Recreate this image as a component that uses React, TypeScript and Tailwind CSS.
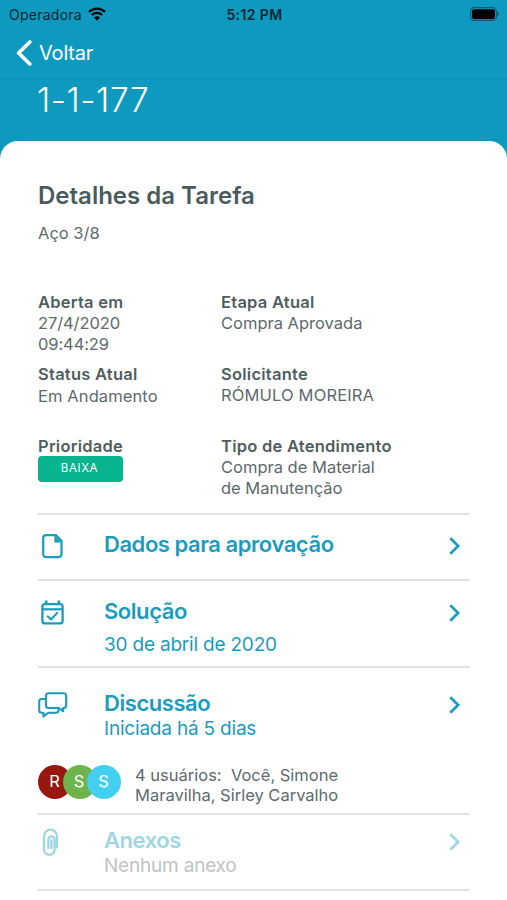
import React from "react";
import clsx from "clsx";

type IconProps = {
  className?: string;
};

const WifiIcon = ({ className }: IconProps) => (
  <svg className={className} viewBox="0 0 18 14" fill="none">
    <path d="M1 4.9A11.6 11.6 0 0 1 17 4.9" stroke="currentColor" strokeWidth="2.3" />
    <path d="M3.8 8A7.6 7.6 0 0 1 14.2 8" stroke="currentColor" strokeWidth="2.2" />
    <path d="M9 13.8 5.9 10.6a4.6 4.6 0 0 1 6.2 0Z" fill="currentColor" />
  </svg>
);

const BatteryIcon = ({ className }: IconProps) => (
  <svg className={className} viewBox="0 0 30 14" fill="none">
    <rect x="0.6" y="0.6" width="25.8" height="12.8" rx="3.6" stroke="#000" strokeOpacity="0.4" strokeWidth="1.2" />
    <rect x="2" y="2.2" width="23" height="9.8" rx="2.2" fill="#000" />
    <path d="M27.4 4.8c2 .6 2 3.8 0 4.4Z" fill="#000" fillOpacity="0.45" />
  </svg>
);

const BackIcon = ({ className }: IconProps) => (
  <svg className={className} viewBox="0 0 16 26" fill="none">
    <path d="M13.8 2 2.6 13l11.2 11" stroke="currentColor" strokeWidth="3.6" strokeLinecap="round" strokeLinejoin="round" />
  </svg>
);

const ChevronIcon = ({ className }: IconProps) => (
  <svg className={className} viewBox="0 0 12 18" fill="none">
    <path d="m1.3 1.2 7.8 7.8-7.8 7.8" stroke="currentColor" strokeWidth="2.7" />
  </svg>
);

const DocumentIcon = ({ className }: IconProps) => (
  <svg className={className} viewBox="0 0 30 30" fill="none">
    <path
      d="M8.2 4.2h9.9l5.4 5.6v13.4a3 3 0 0 1-3 3H8.2a3 3 0 0 1-3-3v-16a3 3 0 0 1 3-3Z"
      stroke="currentColor"
      strokeWidth="2.2"
      strokeLinejoin="round"
    />
    <path d="M16.4 4v7.400h7.200Z" fill="currentColor" />
  </svg>
);

const CalendarIcon = ({ className }: IconProps) => (
  <svg className={className} viewBox="0 0 30 30" fill="none">
    <rect x="4.4" y="6.200" width="20.2" height="19.200" rx="2.5" stroke="currentColor" strokeWidth="2.3" />
    <path d="M5 11.300h19.500" stroke="currentColor" strokeWidth="2.2" />
    <path d="M8.2 2.600v3.400M20.800 2.600v3.400" stroke="currentColor" strokeWidth="2.6" />
    <path d="m9.200 17.700 3.900 3.700 6.800-7.300" stroke="currentColor" strokeWidth="2.1" />
  </svg>
);

const ChatIcon = ({ className }: IconProps) => (
  <svg className={className} viewBox="0 0 30 30" fill="none" stroke="currentColor" strokeWidth="2.1" strokeLinejoin="round">
    <path d="M10.500 3.200h15.200a2.500 2.500 0 0 1 2.500 2.500v9.800a2.500 2.500 0 0 1-2.500 2.500h-.6v3.200L20.800 18H10.500A2.500 2.500 0 0 1 8 15.500V5.700a2.500 2.500 0 0 1 2.500-2.500Z" />
    <path d="M8 9H3.700a2.500 2.500 0 0 0-2.500 2.500v8.800a2.500 2.500 0 0 0 2.500 2.500h1.700v3.600l4.800-3.600h7.800a2.500 2.500 0 0 0 2.500-2.500V18" />
  </svg>
);

const ClipIcon = ({ className }: IconProps) => (
  <svg className={className} viewBox="0 0 30 30" fill="none" stroke="currentColor" strokeWidth="2.3" strokeLinecap="round">
    <path d="M19 20.500V9.200a6.500 6.500 0 0 0-13 0V22.500a5.300 5.300 0 0 0 10.600 0V12.400a3.100 3.100 0 0 0-6.200 0v8.800" />
    <path d="M13.500 13.200v8" />
  </svg>
);

type FieldProps = {
  label: string;
  children: React.ReactNode;
};

const Field = ({ label, children }: FieldProps) => (
  <div className="h-[72px]">
    <div className="leading-[21.2px] font-semibold tracking-[0.25px] text-[#4f5e60]">{label}</div>
    {children}
  </div>
);

type RowProps = {
  icon: React.ReactNode;
  title: string;
  subtitle?: string;
  disabled?: boolean;
  className: string;
  subtitleClassName?: string;
  children?: React.ReactNode;
};

const Row = ({ icon, title, subtitle, disabled, className, subtitleClassName, children }: RowProps) => (
  <section className={clsx("border-b-2 border-[#e0e1e2]", className)}>
    <button
      className={clsx("flex w-full items-start text-left", disabled ? "text-[#9fd6e5]" : "text-[#1b9bbd]")}
      disabled={disabled}
    >
      <span className="w-[66px] shrink-0">{icon}</span>
      <span className="flex-1">
        <span className="block text-[22px] leading-[27px] font-semibold tracking-[-0.45px]">{title}</span>
        {subtitle && (
          <span className={clsx("block text-[19px] leading-6 tracking-[-0.2px]", subtitleClassName)}>{subtitle}</span>
        )}
      </span>
      <ChevronIcon className="mt-[6px] mr-[9px] h-[18px] w-3" />
    </button>
    {children}
  </section>
);

const users = [
  { initial: "R", color: "bg-[#98180f]" },
  { initial: "S", color: "bg-[#6cb44b]" },
  { initial: "S", color: "bg-[#43cfef]" },
];

export default function App() {
  return (
    <div className="flex h-[900px] w-[507px] flex-col overflow-hidden bg-[#0e9abf] font-['Inter',sans-serif]">
      <header className="h-20 border-b border-[#0c90b4]">
        <div className="grid h-7 grid-cols-3 items-center pr-[7px] pl-[9px] text-[14px] text-[#042630]">
          <div className="flex items-center gap-[6px]">
            <span className="tracking-[0.25px]">Operadora</span>
            <WifiIcon className="h-[14px] w-[18px] text-black" />
          </div>
          <div className="text-center font-semibold tracking-[0.4px]">5:12 PM</div>
          <BatteryIcon className="mb-px h-[14px] w-[30px] justify-self-end" />
        </div>
        <button className="flex h-[49px] items-center gap-[7px] pl-4 text-[20px] tracking-[-0.2px] text-white">
          <BackIcon className="h-[26px] w-4" />
          <span>Voltar</span>
        </button>
      </header>
      <h1 className="h-[61px] pl-[37px] text-[33.5px] leading-[40px] font-[350] tracking-[0.6px] text-white">1-1-177</h1>

      <main className="flex-1 rounded-t-[18px] bg-white pr-[37px] pl-[38px] text-[16.5px] leading-[20.7px] text-[#5d6a6c]">
        <h2 className="pt-[39px] text-[24px] leading-8 font-semibold text-[#4a5b5d]">Detalhes da Tarefa</h2>
        <p className="mt-[11px]">Aço 3/8</p>

        <div className="mt-[48px] grid h-[223px] grid-cols-[183px_1fr] border-b-2 border-[#e0e1e2]">
          <div>
            <Field label="Aberta em">
              <span className="tracking-[-0.1px]">
                27/4/2020
                <br />
                09:44:29
              </span>
            </Field>
            <Field label="Status Atual">
              <span className="block pt-px tracking-[0.1px]">Em Andamento</span>
            </Field>
            <Field label="Prioridade">
              <span className="-mt-px flex h-[26px] w-[85px] items-center justify-center rounded-[4px] bg-[#07b48d] pr-[2px] pb-px text-[11.5px] tracking-[0.6px] text-white">
                BAIXA
              </span>
            </Field>
          </div>
          <div>
            <Field label="Etapa Atual">Compra Aprovada</Field>
            <Field label="Solicitante">
              <span className="tracking-[0.15px]">RÓMULO MOREIRA</span>
            </Field>
            <Field label="Tipo de Atendimento">
              Compra de Material
              <br />
              de Manutenção
            </Field>
          </div>
        </div>

        <Row className="h-[66px] pt-4" icon={<DocumentIcon className="h-[30px] w-[30px]" />} title="Dados para aprovação" />
        <Row
          className="h-[87px] pt-[17px]"
          icon={<CalendarIcon className="h-[30px] w-[30px]" />}
          title="Solução"
          subtitle="30 de abril de 2020"
          subtitleClassName="mt-2"
        />
        <Row
          className="h-[147px] pt-[22px]"
          icon={<ChatIcon className="h-[30px] w-[30px]" />}
          title="Discussão"
          subtitle="Iniciada há 5 dias"
        >
          <div className="mt-[17px] flex items-center gap-[14px]">
            <div className="flex">
              {users.map((user, index) => (
                <span
                  key={index}
                  className={clsx(
                    "flex h-[34px] w-[34px] items-center justify-center rounded-full pr-px pb-px text-white not-first:-ml-[9.5px]",
                    user.color,
                  )}
                >
                  {user.initial}
                </span>
              ))}
            </div>
            <p className="pt-[7px] whitespace-pre">
              4 usuários:{"  "}Você, Simone
              <br />
              Maravilha, Sirley Carvalho
            </p>
          </div>
        </Row>
        <Row
          className="h-[76px] pt-3"
          icon={<ClipIcon className="h-[30px] w-[30px]" />}
          title="Anexos"
          subtitle="Nenhum anexo"
          subtitleClassName="text-[#c1c3c4]"
          disabled
        />
      </main>
    </div>
  );
}
